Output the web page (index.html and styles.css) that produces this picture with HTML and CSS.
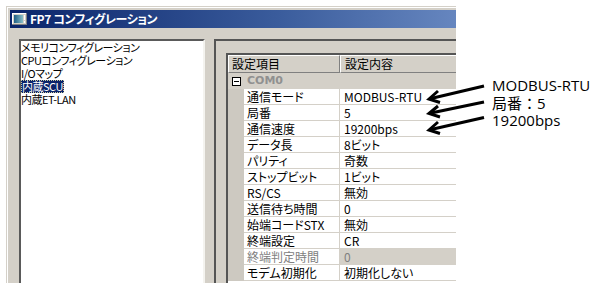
FILE: index.html
```html
<!DOCTYPE html>
<html lang="ja">
<head>
<meta charset="utf-8">
<link rel="stylesheet" href="styles.css">
</head>
<body>
<div class="window">
  <div class="frame">
    <div class="titlebar">
      <svg class="appicon" width="15" height="12" viewBox="0 0 15 12">
        <defs>
          <linearGradient id="ig" x1="0" y1="0" x2="1" y2="0">
            <stop offset="0" stop-color="#1f5f86"/>
            <stop offset="1" stop-color="#8cc0c8"/>
          </linearGradient>
        </defs>
        <rect x="0" y="0" width="15" height="12" fill="#d4d0c8"/>
        <rect x="0" y="0" width="15" height="1" fill="#fff"/>
        <rect x="0" y="0" width="1" height="12" fill="#fff"/>
        <rect x="0" y="11" width="15" height="1" fill="#808080"/>
        <rect x="14" y="0" width="1" height="12" fill="#808080"/>
        <rect x="2" y="2" width="9" height="8" fill="url(#ig)"/>
        <rect x="12" y="2" width="1" height="5" fill="#fff"/>
        <rect x="12" y="8" width="1" height="2" fill="#fff"/>
      </svg>
      <span class="title">FP7 コンフィグレーション</span>
    </div>
    <div class="body">
      <div class="tree">
        <div class="item">メモリコンフィグレーション</div>
        <div class="item">CPUコンフィグレーション</div>
        <div class="item">I/Oマップ</div>
        <div class="item"><span class="sel">内蔵SCU</span></div>
        <div class="item">内蔵ET-LAN</div>
      </div>
      <div class="panel">
        <div class="grid">
          <div class="hdr">
            <div class="hc hc1">設定項目</div>
            <div class="hc hc2">設定内容</div>
          </div>
          <div class="grp"><span class="toggle"></span><span class="grpname">COM0</span></div>
          <div class="row"><div class="gut"></div><div class="lab">通信モード</div><div class="val">MODBUS-RTU</div></div>
          <div class="row"><div class="gut"></div><div class="lab">局番</div><div class="val">5</div></div>
          <div class="row"><div class="gut"></div><div class="lab">通信速度</div><div class="val">19200bps</div></div>
          <div class="row"><div class="gut"></div><div class="lab">データ長</div><div class="val">8ビット</div></div>
          <div class="row"><div class="gut"></div><div class="lab">パリティ</div><div class="val">奇数</div></div>
          <div class="row"><div class="gut"></div><div class="lab">ストップビット</div><div class="val">1ビット</div></div>
          <div class="row"><div class="gut"></div><div class="lab">RS/CS</div><div class="val">無効</div></div>
          <div class="row"><div class="gut"></div><div class="lab">送信待ち時間</div><div class="val">0</div></div>
          <div class="row"><div class="gut"></div><div class="lab">始端コードSTX</div><div class="val">無効</div></div>
          <div class="row"><div class="gut"></div><div class="lab">終端設定</div><div class="val">CR</div></div>
          <div class="row dis"><div class="gut"></div><div class="lab">終端判定時間</div><div class="val">0</div></div>
          <div class="row"><div class="gut"></div><div class="lab">モデム初期化</div><div class="val">初期化しない</div></div>
        </div>
      </div>
    </div>
  </div>
</div>

<svg class="arrows" width="600" height="290" viewBox="0 0 600 290">
  <g fill="none" stroke="#000" stroke-width="3" stroke-linecap="butt" stroke-linejoin="miter">
    <line x1="484" y1="86" x2="431" y2="98.5"/>
    <polyline points="438,91 429,99 440,102.5"/>
    <line x1="484" y1="102" x2="431" y2="113"/>
    <polyline points="438,106 429,113.5 440,117"/>
    <line x1="484" y1="117.5" x2="431" y2="129.5"/>
    <polyline points="438,122 429,130 440,133.5"/>
  </g>
</svg>
<div class="note">
  <div>MODBUS-RTU</div>
  <div>局番：5</div>
  <div>19200bps</div>
</div>
</body>
</html>
```
FILE: styles.css
```css
* { box-sizing: border-box; }

body {
  margin: 0;
  background: #fff;
  font-family: "Noto Sans CJK JP", sans-serif;
  color: #000;
}

.window {
  margin: 6px 0 0 6px;
  width: 450px;
  height: 277px;
  border-top: 1px solid #d4d0c8;
  border-left: 1px solid #d4d0c8;
  overflow: hidden;
}

.frame {
  height: 100%;
  border-top: 1px solid #fff;
  border-left: 1px solid #fff;
  padding: 2px 0 0 2px;
  background: #d4d0c8;
}

.titlebar {
  height: 18px;
  display: flex;
  align-items: center;
  background: linear-gradient(90deg, #0a246a 0%, #3a5c9c 60%, #6686bf 100%);
}

.appicon {
  margin-left: 2px;
  flex: none;
}

.title {
  margin-left: 3px;
  color: #fff;
  font-weight: bold;
  font-size: 12px;
  line-height: 18px;
  letter-spacing: -0.4px;
  font-feature-settings: "palt";
  white-space: nowrap;
}

.body {
  display: flex;
  align-items: flex-start;
  gap: 9px;
  padding: 11px 0 0 9px;
}

.tree {
  flex: none;
  width: 186px;
  height: 260px;
  background: #fff;
  border-top: 2px solid #5a5a5a;
  border-left: 2px solid #5a5a5a;
  border-right: 2px solid #f4f3ef;
  font-size: 11px;
  font-feature-settings: "palt";
}

.item {
  height: 13px;
  line-height: 13px;
  white-space: nowrap;
  letter-spacing: -0.5px;
}

.sel {
  display: inline-block;
  height: 13px;
  padding: 0 1px;
  background: #0a246a;
  color: #fff;
  outline: 1px dotted #c8c8a0;
  outline-offset: -1px;
}

.panel {
  flex: none;
  width: 400px;
  height: 260px;
  border-top: 2px solid #555;
  border-left: 2px solid #555;
  padding: 12px 0 0 10px;
}

.grid {
  width: 380px;
  height: 240px;
  background: #fff;
  border-top: 2px solid #555;
  border-left: 2px solid #555;
  font-size: 12px;
  font-feature-settings: "palt";
}

.hdr {
  display: flex;
  height: 18px;
}

.hc {
  background: #d4d0c8;
  border-top: 1px solid #fff;
  border-left: 1px solid #fff;
  border-right: 1px solid #808080;
  border-bottom: 1px solid #808080;
  line-height: 16px;
  white-space: nowrap;
}

.hc1 { width: 112px; padding-left: 3px; }
.hc2 { flex: 1; padding-left: 4px; }

.grp {
  height: 16px;
  display: flex;
  align-items: center;
  background: #d4d0c8;
}

.toggle {
  position: relative;
  width: 9px;
  height: 9px;
  margin-left: 4px;
  border: 1px solid #000;
  background: #fff;
  flex: none;
}

.toggle::after {
  content: "";
  position: absolute;
  left: 1px;
  top: 3px;
  width: 5px;
  height: 1px;
  background: #000;
}

.grpname {
  margin-left: 6px;
  color: #909090;
  font-weight: bold;
  font-size: 11px;
  line-height: 16px;
  font-family: "DejaVu Sans", sans-serif;
}

.row {
  display: flex;
  height: 16px;
}

.gut {
  width: 16px;
  flex: none;
  background: #cdc9c1;
}

.lab {
  width: 96px;
  flex: none;
  padding-left: 3px;
  border-right: 1px solid #d4d0c8;
  border-bottom: 1px solid #d4d0c8;
  line-height: 15px;
  white-space: nowrap;
}

.val {
  flex: 1;
  padding-left: 4px;
  border-bottom: 1px solid #d4d0c8;
  line-height: 15px;
  white-space: nowrap;
}

.dis .lab { color: #808080; }
.dis .val { color: #808080; background: #d4d0c8; }

.arrows {
  position: absolute;
  left: 0;
  top: 0;
  pointer-events: none;
}

.note {
  position: absolute;
  left: 492px;
  top: 77px;
  font-family: "Open Sans", "Noto Sans CJK JP", sans-serif;
  font-size: 15px;
  line-height: 17.5px;
  color: #000;
}
```
